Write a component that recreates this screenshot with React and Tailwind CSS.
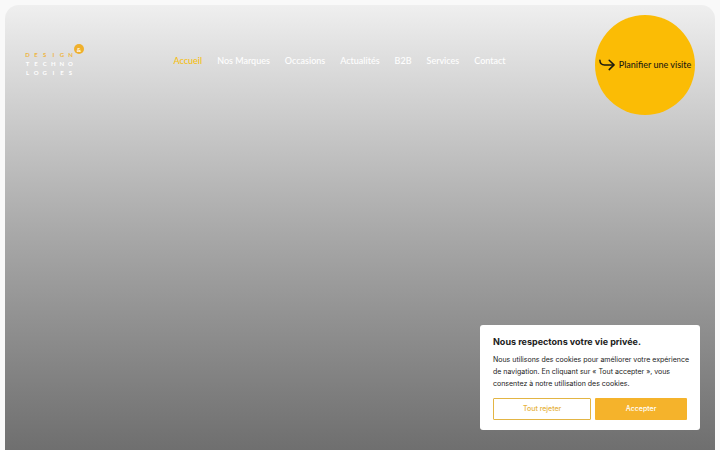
import React, { useState } from 'react';

const navLinks = [
    { label: 'Accueil', active: true },
    { label: 'Nos Marques' },
    { label: 'Occasions' },
    { label: 'Actualités' },
    { label: 'B2B' },
    { label: 'Services' },
    { label: 'Contact' },
];

const logoRows = [
    { word: 'DESIGN', color: 'text-[#eeb53f]' },
    { word: 'TECHNO', color: 'text-white' },
    { word: 'LOGIES', color: 'text-white' },
];

const Logo = () => (
    <a href="#" aria-label="Design & Technologies" className="relative block w-[59px] pr-[11px] font-['Lato',sans-serif] text-[6px] leading-[9px] font-bold">
        {logoRows.map(({ word, color }) => (
            <span key={word} className={`flex justify-between ${color}`}>
                {word.split('').map((letter, i) => (
                    <span key={i} className="w-[5px] text-center">{letter}</span>
                ))}
            </span>
        ))}
        <span className="absolute -top-1.5 right-0 flex size-2.5 items-center justify-center rounded-full bg-[#efb02c] text-white">
            &amp;
        </span>
    </a>
);

const VisitButton = () => (
    <a href="#" className="flex size-25 shrink-0 items-center justify-center gap-1 rounded-full bg-[#fbbc05] font-['Lato',sans-serif] text-[9px] font-medium text-[#1d1a10]">
        <svg viewBox="0 0 16 12" className="h-3 w-4 shrink-0" fill="none" stroke="currentColor" strokeWidth="1.5" strokeLinecap="round" strokeLinejoin="round">
            <path d="M0.9 1.2C1 4.2 2.8 5.9 5.6 5.9H14.6" />
            <path d="M10.2 1.2L15 5.9L10.2 10.6" />
        </svg>
        <span className="whitespace-nowrap">Planifier une visite</span>
    </a>
);

const CookieBanner = ({ onClose }) => (
    <section className="fixed right-5 bottom-5 w-55 rounded-[3px] bg-white px-[13px] py-[10px] font-['Inter',sans-serif] text-[#212121]">
        <h2 className="text-[9px] leading-[14px] font-bold">Nous respectons votre vie privée.</h2>
        <p className="mt-[5px] -mr-1 text-[7px] leading-3">
            Nous utilisons des cookies pour améliorer votre expérience de navigation. En cliquant sur « Tout accepter », vous consentez à notre utilisation des cookies.
        </p>
        <div className="mt-2 grid grid-cols-[15fr_14fr] gap-1 text-[7px] leading-3 font-medium">
            <button onClick={onClose} className="h-[22px] rounded-[1px] border border-[#e3b544] text-[#e6b23c]">
                Tout rejeter
            </button>
            <button onClick={onClose} className="h-[22px] rounded-[1px] bg-[#f5b32b] text-white">
                Accepter
            </button>
        </div>
    </section>
);

const App = () => {
    const [showBanner, setShowBanner] = useState(true);

    return (
        <div className="h-screen overflow-hidden bg-[#f9f9f9] px-[5px] pt-[5px]">
            <main className="h-full rounded-t-[14px] bg-linear-to-b from-[#efefef] via-[#aaaaaa] to-[#6f6f6f]">
                <header className="flex items-start justify-between px-5 pt-[10px]">
                    <div className="pt-[35px]">
                        <Logo />
                    </div>
                    <nav className="flex gap-[15px] pt-[39px] font-['Lato',sans-serif] text-[9px] leading-[14px] font-medium">
                        {navLinks.map(({ label, active }) => (
                            <a key={label} href="#" className={active ? 'text-[#f5bd0f]' : 'text-white'}>
                                {label}
                            </a>
                        ))}
                    </nav>
                    <VisitButton />
                </header>
            </main>
            {showBanner && <CookieBanner onClose={() => setShowBanner(false)} />}
        </div>
    );
};

export default App;
